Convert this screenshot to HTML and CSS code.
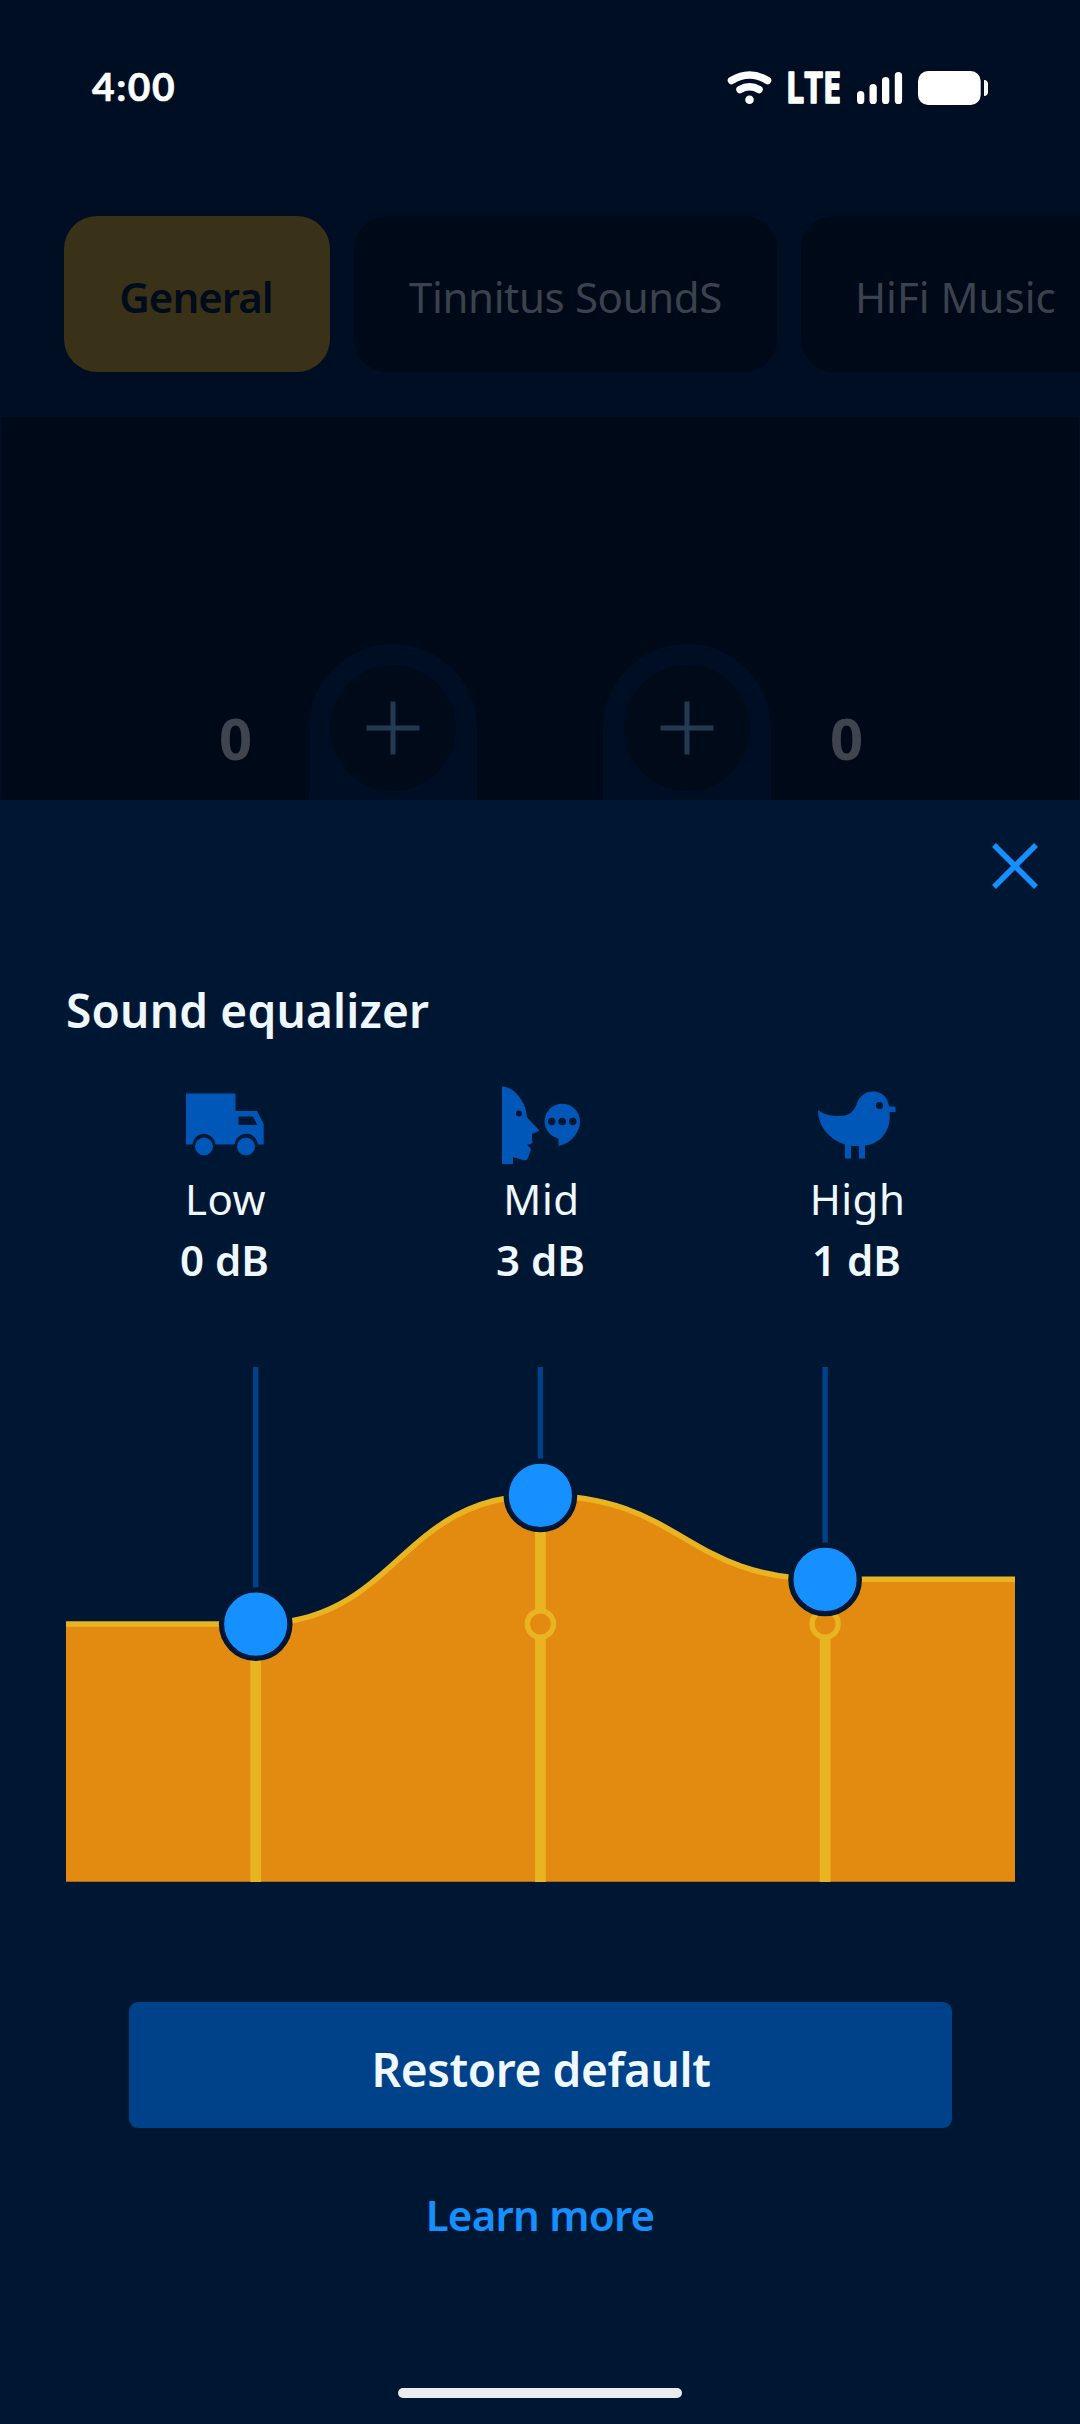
FILE: index.html
```html
<!DOCTYPE html>
<html lang="en">
<head>
<meta charset="utf-8">
<title>Sound equalizer</title>
<link rel="stylesheet" href="styles.css">
</head>
<body>
<div class="phone">
  <div class="backdrop">
    <header class="status">
      <span class="clock">4:00</span>
      <svg class="status-icons" width="264" height="76" viewBox="724 50 264 76">
        <g fill="none" stroke="#fff" stroke-width="7.5" stroke-linecap="round">
          <path d="M731.5 80.5Q749.5 69.5 767.5 80.5"/>
          <path d="M740 89.5Q749.5 84 759 89.5"/>
        </g>
        <circle cx="749.5" cy="99.7" r="4.3" fill="#fff"/>
        <text class="network" x="786" y="103" textLength="55" lengthAdjust="spacingAndGlyphs">LTE</text>
        <g fill="#fff">
          <rect x="857" y="91" width="7.3" height="13" rx="3.6"/>
          <rect x="869.5" y="84" width="7.3" height="20" rx="3.6"/>
          <rect x="882" y="77" width="7.3" height="27" rx="3.6"/>
          <rect x="894.8" y="72" width="7.3" height="32" rx="3.6"/>
          <rect x="918" y="71" width="62.7" height="34" rx="10"/>
          <path d="M984 80c2.500 0 4 1.500 4 4v8c0 2.500-1.500 4-4 4z"/>
        </g>
      </svg>
    </header>
    <nav class="tabs">
      <div class="tab tab-active">General</div>
      <div class="tab tab-wide">Tinnitus SoundS</div>
      <div class="tab tab-cut">HiFi Music</div>
    </nav>
    <section class="volume">
      <span class="level">0</span>
      <div class="sliders">
        <div class="slider"><div class="plus"><svg width="54" height="54" viewBox="0 0 54 54"><path d="M27 .5v53M.5 27h53"/></svg></div></div>
        <div class="slider"><div class="plus"><svg width="54" height="54" viewBox="0 0 54 54"><path d="M27 .5v53M.5 27h53"/></svg></div></div>
      </div>
      <span class="level">0</span>
    </section>
  </div>
  <main class="sheet">
    <svg class="close" width="46" height="46" viewBox="0 0 46 46"><path d="M2 2l42 42M44 2L2 44"/></svg>
    <h1 class="title">Sound equalizer</h1>
    <div class="bands">
      <div class="band">
        <svg class="band-icon" width="78" height="78" viewBox="0 0 78 78">
          <path d="M0 7.500H49.500V25H71L77.700 38V58.500H72C69.500 44 51 44 48.500 58.500H29.500C27 44 8.500 44 6.500 58.500H0z"/>
          <path class="hole" d="M52.500 30.500H67L71.500 39H52.500z"/>
          <circle cx="18" cy="60.500" r="9"/><circle cx="60" cy="60.500" r="9"/>
        </svg>
        <span class="name">Low</span><span class="value">0 dB</span>
      </div>
      <div class="band">
        <svg class="band-icon" width="78" height="78" viewBox="0 0 78 78">
          <path d="M0 .5C12 1 24 15 25 31.500L36.500 43.500Q37.500 45 35.500 45.500L30 48V54L30.500 56.500Q29 59 25 58.500L29 63L26 72Q25 75 21 74L11 71V78H0z"/>
          <circle class="hole" cx="17" cy="27.500" r="3"/>
          <path d="M56.500 60V52.500C48 50 42.500 43.500 42.500 35.500A17.700 17.700 0 0 1 78 35.500C78 46 70 57 56.500 60z"/>
          <circle class="hole" cx="49.700" cy="35.500" r="3.800"/><circle class="hole" cx="60.200" cy="35.500" r="3.800"/><circle class="hole" cx="70.800" cy="35.500" r="3.800"/>
        </svg>
        <span class="name">Mid</span><span class="value">3 dB</span>
      </div>
      <div class="band">
        <svg class="band-icon" width="78" height="78" viewBox="0 0 78 78">
          <path d="M0 24C5 28 12 30 21 30C31 30 36 26 39 17C42 10 47 5.500 55.500 5.500C64 5.500 70 12 71 20.500H77.500V26H71.500C74 46 60 59 47 59.500V72.500H41V60H33V72.500H27V58.500C10 53 0 39 0 24z"/>
          <circle class="hole" cx="61.500" cy="19.500" r="3.600"/>
        </svg>
        <span class="name">High</span><span class="value">1 dB</span>
      </div>
    </div>
    <svg class="chart" width="949" height="516" viewBox="66 1366 949 516">
      <path class="area" d="M66 1624H255.700C398 1624 398 1495.400 540.400 1495.400S683 1579.300 825.100 1579.300H1015V1881.700H66z"/>
      <path class="curve" d="M66 1624H255.700C398 1624 398 1495.400 540.400 1495.400S683 1579.300 825.100 1579.300H1015"/>
      <path class="track" d="M255.700 1367V1590M540.400 1367V1460M825.100 1367V1545"/>
      <path class="fill" d="M255.700 1624V1882M540.400 1495V1882M825.100 1579V1882"/>
      <circle class="zero" cx="540.400" cy="1624" r="13.100"/>
      <circle class="zero" cx="825.100" cy="1624" r="13.100"/>
      <circle class="knob" cx="255.700" cy="1624.100" r="34.200"/>
      <circle class="knob" cx="540.400" cy="1495.400" r="34.200"/>
      <circle class="knob" cx="825.100" cy="1579.400" r="34.200"/>
    </svg>
    <button class="restore">Restore default</button>
    <a class="learn">Learn more</a>
    <div class="home"></div>
  </main>
</div>
</body>
</html>
```
FILE: styles.css
```css
* { box-sizing: border-box; }
body { margin: 0; background: #001733; font-family: "Noto Sans", "Open Sans", sans-serif; }
.phone { width: 1080px; height: 2424px; overflow: hidden; display: flex; flex-direction: column; }

.backdrop { height: 800px; flex: none; overflow: hidden; background: #000e23; display: flex; flex-direction: column; }
.status { flex: none; height: 216px; padding: 50px 92px 0 92px; display: flex; justify-content: space-between; align-items: flex-start; }
.clock { margin-top: 14px; font: 700 39px/44px "Lato", sans-serif; color: #fff; -webkit-text-stroke: .6px #fff; letter-spacing: 1.600px; }
.status-icons { display: block; flex: none; }
.network { font: 700 43px "Open Sans", sans-serif; fill: #fff; stroke: #fff; stroke-width: 1.500px; stroke-linejoin: round; }
.tabs { flex: none; display: flex; gap: 24px; padding-left: 64px; height: 201px; align-items: flex-start; }
.tab { flex: none; height: 156px; border-radius: 33px; background: #000918; color: #3b424d; font-size: 42px; line-height: 60px; letter-spacing: -.35px; padding-top: 51px; text-align: center; white-space: nowrap; }
.tab-active { width: 266px; background: #3a3119; color: #000b1b; font-weight: 600; letter-spacing: -1px; padding: 51px 2px 0 0; }
.tab-wide { width: 423px; }
.tab-cut { width: 330px; padding-left: 54px; text-align: left; letter-spacing: 0; }
.volume { flex: none; height: 383px; margin: 0 1px 0 2px; padding: 227px 215px 0 216px; background: #000917; display: flex; justify-content: space-between; align-items: flex-start; }
.level { width: 35px; margin-top: 54px; font-size: 58px; line-height: 80px; font-weight: 700; color: #3f444e; text-align: center; }
.sliders { display: flex; gap: 126px; margin-right: 2px; }
.slider { width: 168px; height: 300px; border-radius: 84px; background: #000e23; padding: 21px; }
.plus { width: 126px; height: 126px; border-radius: 50%; background: #000a19; display: flex; align-items: center; justify-content: center; }
.plus path { stroke: #233a52; stroke-width: 5; fill: none; }

.sheet { flex: none; height: 1624px; background: #001733; display: flex; flex-direction: column; align-items: center; color: #f0f8ff; }
.close { flex: none; align-self: flex-end; margin: 43px 42px 0 0; stroke: #1690ff; stroke-width: 5.500; }
.title { align-self: flex-start; margin: 91px 0 0 66px; font-size: 46px; line-height: 60px; font-weight: 600; letter-spacing: .2px; white-space: nowrap; }
.bands { width: 948px; margin: 46px 0 0 1px; display: grid; grid-template-columns: repeat(3, 1fr); }
.band { display: flex; flex-direction: column; align-items: center; font-size: 42px; line-height: 61px; }
.band-icon { display: block; margin-bottom: 4px; fill: #0057b8; }
.band-icon .hole { fill: #001733; }
.name { letter-spacing: .5px; padding-left: 2px; }
.value { font-weight: 600; }
.chart { flex: none; display: block; margin-top: 76px; }
.area { fill: #e38b10; }
.curve { fill: none; stroke: #e9b422; stroke-width: 5.500; }
.track { stroke: #004289; stroke-width: 5.300; }
.fill { stroke: #e9b422; stroke-width: 10.700; }
.zero { fill: #e38b10; stroke: #e9b422; stroke-width: 5.300; }
.knob { fill: #1690ff; stroke: #001733; stroke-width: 5.300; }
.restore { flex: none; width: 823px; height: 126px; margin-top: 120px; border: 0; border-radius: 9px; background: #004289; color: #f0f8ff; font: 600 46px/60px "Noto Sans", sans-serif; letter-spacing: -.4px; padding: 7px 0 0 2px; }
.learn { flex: none; margin-top: 57px; font-size: 42px; line-height: 60px; font-weight: 600; letter-spacing: -.75px; color: #1690ff; }
.home { width: 284px; height: 10px; margin-top: 143px; border-radius: 5px; background: #ebecee; }
```
